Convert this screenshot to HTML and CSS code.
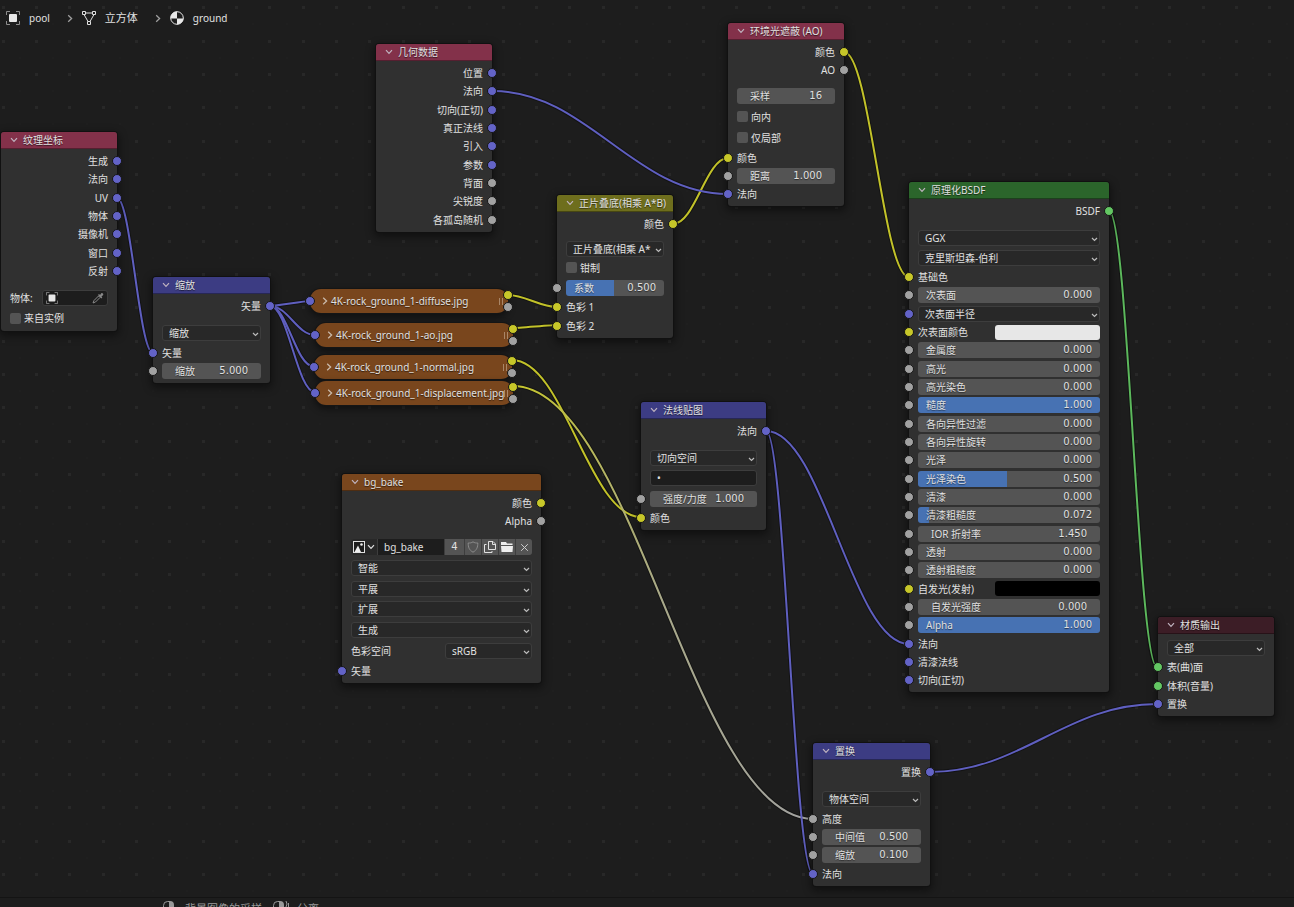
FILE: index.html
```html
<!DOCTYPE html>
<html lang="zh-CN">
<head>
<meta charset="utf-8">
<title>ground</title>
<link rel="stylesheet" href="styles.css">
</head>
<body>
<svg class="defs" aria-hidden="true">
  <symbol id="down" viewBox="0 0 8 6"><path d="M1 1.2 4 4.4 7 1.2" fill="none" stroke="currentColor" stroke-width="1.2"/></symbol>
  <symbol id="right" viewBox="0 0 6 8"><path d="M1.2 .8 4.6 4 1.2 7.2" fill="none" stroke="currentColor" stroke-width="1.3"/></symbol>
  <symbol id="object" viewBox="0 0 14 14"><path d="M.5 4V.5H4M10 .5h3.500V4M13.500 10v3.500H10M4 13.500H.5V10" fill="none" stroke="#8c8c8c"/><rect x="3" y="3" width="8" height="8" rx="1" fill="#e8e8e8"/></symbol>
  <symbol id="mouse" viewBox="0 0 16 16"><path d="M6 .5H4.500A4 4 0 0 0 .5 4.500V11a5 5 0 0 0 10 0V4.500" fill="none" stroke="#999"/><path d="M6 0h1a4 4 0 0 1 4 4v4H6z" fill="#999"/></symbol>
</svg>

<main class="canvas">
  <svg class="wires" aria-hidden="true">
    <defs>
      <pattern id="dots" width="100" height="100" patternUnits="userSpaceOnUse">
        <path d="M2 6h3v3H2zM35 6h3v3h-3zM68 6h3v3h-3zM2 40h3v3H2zM35 40h3v3h-3zM68 40h3v3h-3zM2 73h3v3H2zM35 73h3v3h-3zM68 73h3v3h-3z" fill="#282828"/>
        <path d="M19 23h2v2h-2zM52 23h2v2h-2zM86 23h2v2h-2zM19 57h2v2h-2zM52 57h2v2h-2zM86 57h2v2h-2zM19 90h2v2h-2zM52 90h2v2h-2zM86 90h2v2h-2z" fill="#1f1f1f"/>
      </pattern>
      <linearGradient id="fade" gradientUnits="userSpaceOnUse" x1="513" y1="0" x2="813" y2="0">
        <stop offset="0" stop-color="#c7c729"/><stop offset=".5" stop-color="#a8a88a"/><stop offset="1" stop-color="#a1a1a1"/>
      </linearGradient>
      <g id="links">
        <path class="w-vec" d="M117 198C131 198 139 353 153 353"/>
        <path class="w-vec" d="M270 306C277 306 303 301 310 301"/>
        <path class="w-vec" d="M270 306C288 306 297 335 315 335"/>
        <path class="w-vec" d="M270 306C287 306 296 366 313 366"/>
        <path class="w-vec" d="M270 306C288 306 297 392 315 392"/>
        <path class="w-col" d="M508 295C525 295 540 307 557 307"/>
        <path class="w-col" d="M513 328C517 328 553 325 557 325"/>
        <path class="w-col" d="M512 360C564 360 589 517 641 517"/>
        <path class="w-mix" d="M513 386C633 386 693 819 813 819"/>
        <path class="w-col" d="M673 224C695 224 706 158 728 158"/>
        <path class="w-vec" d="M493 91C587 91 634 194 728 194"/>
        <path class="w-col" d="M844 52C870 52 883 277 909 277"/>
        <path class="w-vec" d="M766 431C823 431 852 644 909 644"/>
        <path class="w-vec" d="M766 431C785 431 794 874 813 874"/>
        <path class="w-sha" d="M1109 211C1128 211 1138 667 1157 667"/>
        <path class="w-vec" d="M930 772C1021 772 1066 704 1157 704"/>
      </g>
    </defs>
    <rect width="100%" height="100%" fill="url(#dots)"/>
    <use href="#links" class="casing"/>
    <use href="#links" class="core"/>
  </svg>

  <nav class="crumbs">
    <span class="crumb"><svg width="14" height="14"><use href="#object"/></svg><span>pool</span></span>
    <svg class="sep" width="6" height="9"><use href="#right"/></svg>
    <span class="crumb"><svg width="14" height="14" viewBox="0 0 14 14" fill="none" stroke="#e0e0e0"><path d="M3.500 2h7M2 3.500 6 10.500M12 3.500 8 10.500"/><path d="M.5.5h3v3h-3zM10.500.5h3v3h-3zM5.500 10.500h3v3h-3z"/></svg><span class="cjk">立方体</span></span>
    <svg class="sep" width="6" height="9"><use href="#right"/></svg>
    <span class="crumb"><svg width="14" height="14" viewBox="0 0 14 14"><circle cx="7" cy="7" r="6.300" fill="#1d1d1d" stroke="#e8e8e8"/><path d="M7 .5V7.500H.6A6.500 6.500 0 0 1 7 .5M7 7.500h6.500A6.500 6.500 0 0 1 7 13.500z" fill="#e8e8e8"/></svg><span>ground</span></span>
  </nav>

  <section class="node n-texcoord">
    <h2 class="head red"><svg><use href="#down"/></svg>纹理坐标</h2>
    <div class="body">
      <div class="row out">生成<i class="socket vec"></i></div>
      <div class="row out">法向<i class="socket vec"></i></div>
      <div class="row out">UV<i class="socket vec"></i></div>
      <div class="row out">物体<i class="socket vec"></i></div>
      <div class="row out">摄像机<i class="socket vec"></i></div>
      <div class="row out">窗口<i class="socket vec"></i></div>
      <div class="row out">反射<i class="socket vec"></i></div>
      <div class="row tall gap split"><span>物体:</span><button class="picker" aria-label="物体"><svg width="12" height="12"><use href="#object"/></svg><svg width="12" height="12" viewBox="0 0 12 12"><path d="M1 11 2 8.500 6.500 4 8 5.500 3.500 10z" fill="none" stroke="#888"/><path d="M6 3 7 2l1 1 1.500-2A1.500 1.500 0 0 1 11.200 3L9.500 4.500l.8.900-1 1z" fill="#888"/></svg></button></div>
      <div class="row tall"><label class="check"><input type="checkbox">来自实例</label></div>
    </div>
  </section>

  <section class="node n-scale">
    <h2 class="head blue"><svg><use href="#down"/></svg>缩放</h2>
    <div class="body">
      <div class="row out">矢量<i class="socket vec"></i></div>
      <div class="row tall gap"><select aria-label="类型"><option>缩放</option></select></div>
      <div class="row">矢量<i class="socket vec"></i></div>
      <div class="row"><label class="field num">缩放<input value="5.000"></label><i class="socket val"></i></div>
    </div>
  </section>

  <section class="node n-geometry">
    <h2 class="head red"><svg><use href="#down"/></svg>几何数据</h2>
    <div class="body">
      <div class="row out">位置<i class="socket vec"></i></div>
      <div class="row out">法向<i class="socket vec"></i></div>
      <div class="row out">切向(正切)<i class="socket vec"></i></div>
      <div class="row out">真正法线<i class="socket vec"></i></div>
      <div class="row out">引入<i class="socket vec"></i></div>
      <div class="row out">参数<i class="socket vec"></i></div>
      <div class="row out">背面<i class="socket val"></i></div>
      <div class="row out">尖锐度<i class="socket val"></i></div>
      <div class="row out">各孤岛随机<i class="socket val"></i></div>
    </div>
  </section>

  <section class="pill p-diffuse"><svg><use href="#right"/></svg><h2>4K-rock_ground_1-diffuse.jpg</h2><i class="grip"></i><i class="socket vec"></i><i class="socket col upper"></i><i class="socket val lower"></i></section>
  <section class="pill p-ao"><svg><use href="#right"/></svg><h2>4K-rock_ground_1-ao.jpg</h2><i class="grip"></i><i class="socket vec"></i><i class="socket col upper"></i><i class="socket val lower"></i></section>
  <section class="pill p-normal"><svg><use href="#right"/></svg><h2>4K-rock_ground_1-normal.jpg</h2><i class="grip"></i><i class="socket vec"></i><i class="socket col upper"></i><i class="socket val lower"></i></section>
  <section class="pill p-disp"><svg><use href="#right"/></svg><h2>4K-rock_ground_1-displacement.jpg</h2><i class="grip"></i><i class="socket vec"></i><i class="socket col upper"></i><i class="socket val lower"></i></section>

  <section class="node n-bake">
    <h2 class="head brown"><svg><use href="#down"/></svg>bg_bake</h2>
    <div class="body">
      <div class="row out">颜色<i class="socket col"></i></div>
      <div class="row out">Alpha<i class="socket val"></i></div>
      <div class="row tall gap">
        <div class="datablock">
          <button class="browse" aria-label="浏览图像"><svg width="12" height="12" viewBox="0 0 12 12"><rect x=".5" y=".5" width="11" height="11" fill="#1d1d1d" stroke="#e0e0e0"/><path d="M1.500 11 5 4.500 8 11z" fill="#eee"/><circle cx="8.500" cy="3.500" r="1.300" fill="#eee"/></svg><svg width="8" height="6"><use href="#down"/></svg></button>
          <input class="dbname" aria-label="名称" value="bg_bake">
          <button class="users digits">4</button>
          <button aria-label="伪用户"><svg width="12" height="12" viewBox="0 0 12 12"><path d="M6 .8C4.500 2 3 2 1.200 2c0 4 .8 7 4.800 9.200C10 9 10.800 6 10.800 2 9 2 7.500 2 6 .8z" fill="none" stroke="#8c8c8c"/></svg></button>
          <button aria-label="新建"><svg width="12" height="12" viewBox="0 0 12 12" fill="none" stroke="#e0e0e0"><path d="M4.500.5H9L11.500 3v5.500h-7zM8.500.5V3.500h3M2.500 3.500h-2v8h7.500v-1.500"/></svg></button>
          <button aria-label="打开"><svg width="12" height="12" viewBox="0 0 12 12" fill="#eee"><path d="M0 1h5l1 1.500h5.500V4H0zM0 5h12l-.5 6H.5z"/></svg></button>
          <button aria-label="断开"><svg width="9" height="9" viewBox="0 0 9 9" fill="none" stroke="#ccc"><path d="m1.200 1.200 6.600 6.600M7.800 1.200 1.200 7.800"/></svg></button>
        </div>
      </div>
      <div class="row tall"><select aria-label="插值"><option>智能</option></select></div>
      <div class="row tall"><select aria-label="投射"><option>平展</option></select></div>
      <div class="row tall"><select aria-label="扩展"><option>扩展</option></select></div>
      <div class="row tall"><select aria-label="来源"><option>生成</option></select></div>
      <div class="row tall split"><label for="space">色彩空间</label><select id="space" class="half"><option>sRGB</option></select></div>
      <div class="row">矢量<i class="socket vec"></i></div>
    </div>
  </section>

  <section class="node n-mix">
    <h2 class="head olive"><svg><use href="#down"/></svg>正片叠底(相乘 A*B)</h2>
    <div class="body">
      <div class="row out">颜色<i class="socket col"></i></div>
      <div class="row gap"><select aria-label="混合模式"><option>正片叠底(相乘 A*</option></select></div>
      <div class="row"><label class="check"><input type="checkbox">钳制</label></div>
      <div class="row tall"><label class="field" style="--fill:49%">系数<input value="0.500"></label><i class="socket val"></i></div>
      <div class="row">色彩 1<i class="socket col"></i></div>
      <div class="row">色彩 2<i class="socket col"></i></div>
    </div>
  </section>

  <section class="node n-ao">
    <h2 class="head red"><svg><use href="#down"/></svg>环境光遮蔽 (AO)</h2>
    <div class="body">
      <div class="row out">颜色<i class="socket col"></i></div>
      <div class="row out">AO<i class="socket val"></i></div>
      <div class="row tall gap"><label class="field num">采样<input value="16"></label></div>
      <div class="row tall"><label class="check"><input type="checkbox">向内</label></div>
      <div class="row tall"><label class="check"><input type="checkbox">仅局部</label></div>
      <div class="row">颜色<i class="socket col"></i></div>
      <div class="row"><label class="field num">距离<input value="1.000"></label><i class="socket val"></i></div>
      <div class="row">法向<i class="socket vec"></i></div>
    </div>
  </section>

  <section class="node n-normal">
    <h2 class="head blue"><svg><use href="#down"/></svg>法线贴图</h2>
    <div class="body">
      <div class="row out">法向<i class="socket vec"></i></div>
      <div class="row tall gap"><select aria-label="空间"><option>切向空间</option></select></div>
      <div class="row tall"><button class="uvmap" aria-label="UV 贴图">•</button></div>
      <div class="row tall"><label class="field num">强度/力度<input value="1.000"></label><i class="socket val"></i></div>
      <div class="row">颜色<i class="socket col"></i></div>
    </div>
  </section>

  <section class="node n-bsdf">
    <h2 class="head green"><svg><use href="#down"/></svg>原理化BSDF</h2>
    <div class="body">
      <div class="row out">BSDF<i class="socket sha"></i></div>
      <div class="row tall gap"><select aria-label="分布"><option>GGX</option></select></div>
      <div class="row tall"><select aria-label="次表面方法"><option>克里斯坦森-伯利</option></select></div>
      <div class="row">基础色<i class="socket col"></i></div>
      <div class="row"><label class="field">次表面<input value="0.000"></label><i class="socket val"></i></div>
      <div class="row"><select aria-label="次表面半径"><option>次表面半径</option></select><i class="socket vec"></i></div>
      <div class="row split"><label for="sss">次表面颜色</label><input id="sss" type="color" value="#e7e7e7"><i class="socket col"></i></div>
      <div class="row"><label class="field">金属度<input value="0.000"></label><i class="socket val"></i></div>
      <div class="row"><label class="field">高光<input value="0.000"></label><i class="socket val"></i></div>
      <div class="row"><label class="field">高光染色<input value="0.000"></label><i class="socket val"></i></div>
      <div class="row"><label class="field" style="--fill:100%">糙度<input value="1.000"></label><i class="socket val"></i></div>
      <div class="row"><label class="field">各向异性过滤<input value="0.000"></label><i class="socket val"></i></div>
      <div class="row"><label class="field">各向异性旋转<input value="0.000"></label><i class="socket val"></i></div>
      <div class="row"><label class="field">光泽<input value="0.000"></label><i class="socket val"></i></div>
      <div class="row"><label class="field" style="--fill:49%">光泽染色<input value="0.500"></label><i class="socket val"></i></div>
      <div class="row"><label class="field">清漆<input value="0.000"></label><i class="socket val"></i></div>
      <div class="row"><label class="field" style="--fill:6%">清漆粗糙度<input value="0.072"></label><i class="socket val"></i></div>
      <div class="row"><label class="field num">IOR 折射率<input value="1.450"></label><i class="socket val"></i></div>
      <div class="row"><label class="field">透射<input value="0.000"></label><i class="socket val"></i></div>
      <div class="row"><label class="field">透射粗糙度<input value="0.000"></label><i class="socket val"></i></div>
      <div class="row split"><label for="emit">自发光(发射)</label><input id="emit" type="color" value="#000000"><i class="socket col"></i></div>
      <div class="row"><label class="field num">自发光强度<input value="0.000"></label><i class="socket val"></i></div>
      <div class="row"><label class="field" style="--fill:100%">Alpha<input value="1.000"></label><i class="socket val"></i></div>
      <div class="row">法向<i class="socket vec"></i></div>
      <div class="row">清漆法线<i class="socket vec"></i></div>
      <div class="row">切向(正切)<i class="socket vec"></i></div>
    </div>
  </section>

  <section class="node n-output">
    <h2 class="head maroon"><svg><use href="#down"/></svg>材质输出</h2>
    <div class="body">
      <div class="row tall"><select aria-label="目标"><option>全部</option></select></div>
      <div class="row">表(曲)面<i class="socket sha"></i></div>
      <div class="row">体积(音量)<i class="socket sha"></i></div>
      <div class="row">置换<i class="socket vec"></i></div>
    </div>
  </section>

  <section class="node n-displace">
    <h2 class="head blue"><svg><use href="#down"/></svg>置换</h2>
    <div class="body">
      <div class="row out">置换<i class="socket vec"></i></div>
      <div class="row tall gap"><select aria-label="空间"><option>物体空间</option></select></div>
      <div class="row">高度<i class="socket val"></i></div>
      <div class="row"><label class="field num">中间值<input value="0.500"></label><i class="socket val"></i></div>
      <div class="row"><label class="field num">缩放<input value="0.100"></label><i class="socket val"></i></div>
      <div class="row">法向<i class="socket vec"></i></div>
    </div>
  </section>
</main>

<footer class="status">
  <span class="hint"><svg width="16" height="16"><use href="#mouse"/></svg>背景图像的采样</span>
  <span class="hint"><svg width="18" height="16"><use href="#mouse" width="16" height="16"/><path d="M13 0q2 3 0 6M15.500 2v6" fill="none" stroke="#999"/></svg>分离</span>
</footer>
</body>
</html>
```
FILE: styles.css
```css
* { box-sizing: border-box; }

body {
  margin: 0;
  height: 100vh;
  display: flex;
  flex-direction: column;
  overflow: hidden;
  background: #1d1d1d;
  color: #e0e0e0;
  font: 10px/14px "Noto Sans", "Noto Sans CJK SC", sans-serif;
}

h2 { margin: 0; font: inherit; }
button, input, select { font: inherit; color: inherit; margin: 0; padding: 0; border: 0; }
i { font-style: normal; }
.defs { position: absolute; width: 0; height: 0; }

.canvas { position: relative; flex: 1; min-height: 0; overflow: hidden; }
.wires { position: absolute; inset: 0; width: 100%; height: 100%; fill: none; }
.casing { stroke-width: 4; opacity: .35; --vec: #000; --col: #000; --sha: #000; --mix: #000; }
.core { stroke-width: 2; --vec: #5f5fc0; --col: #c2c229; --sha: #5cb85c; --mix: url(#fade); }
.w-vec { stroke: var(--vec); }
.w-col { stroke: var(--col); }
.w-sha { stroke: var(--sha); }
.w-mix { stroke: var(--mix); }

/* breadcrumb */
.crumbs { position: absolute; top: 10px; left: 6px; height: 16px; display: flex; align-items: center; }
.crumb { display: flex; align-items: center; gap: 9px; }
.cjk { font-size: 11px; }
.sep { margin: 0 9px 0 17px; color: #a0a0a0; }

/* nodes */
.node {
  position: absolute;
  width: 116px;
  border-radius: 3px;
  background: #303030;
  box-shadow: 0 0 0 1px #111, 0 3px 8px 2px rgba(0, 0, 0, .45);
}
.head {
  height: 17px;
  display: flex;
  align-items: center;
  gap: 5px;
  padding-left: 9px;
  border-radius: 3px 3px 0 0;
  border-bottom: 1px solid rgba(0, 0, 0, .35);
  white-space: nowrap;
  text-shadow: 0 1px 1px rgba(0, 0, 0, .6);
}
.head svg { width: 8px; height: 6px; color: #c0b4c0; }
.red { background: #83314a; }
.blue { background: #3c3c83; }
.brown { background: #79461d; }
.olive { background: #6e6e1d; }
.green { background: #2b652b; }
.maroon { background: #3c1d26; }

.body { padding: 3px 9px; }
.row {
  position: relative;
  height: 18px;
  margin: 0 -9px;
  padding: 0 9px;
  display: flex;
  align-items: center;
  white-space: nowrap;
}
.row:nth-child(3n) { height: 19px; }
.row.tall { height: 21px; }
.row.tall:nth-child(3n) { height: 20px; }
.gap { margin-top: 7px; }
.out { justify-content: flex-end; }
.split { justify-content: space-between; }

.socket {
  position: absolute;
  left: -5px;
  top: 50%;
  width: 10px;
  height: 10px;
  margin-top: -5px;
  border: 1px solid #161616;
  border-radius: 50%;
}
.out .socket { left: auto; right: -5px; }
.vec { background: #6363c7; }
.col { background: #c7c729; }
.val { background: #a1a1a1; }
.sha { background: #63c763; }

/* controls */
.field {
  flex: 1;
  min-width: 0;
  height: 16px;
  display: flex;
  align-items: center;
  padding: 0 8px;
  border-radius: 3px;
  background: linear-gradient(#4772b3, #4772b3) no-repeat 0 0 / var(--fill, 0%) 100%, #545454;
  text-shadow: 0 1px 1px rgba(0, 0, 0, .5);
}
.field.num { padding: 0 13px; }
.field input {
  flex: 1;
  width: 0;
  min-width: 0;
  height: 14px;
  background: none;
  text-align: right;
  text-shadow: inherit;
  outline: 0;
}
.field input, .digits { font-family: "DejaVu Sans", sans-serif; }

select {
  appearance: none;
  flex: 1;
  min-width: 0;
  height: 16px;
  padding: 0 12px 0 6px;
  border: 1px solid #3d3d3d;
  border-radius: 3px;
  background: #282828 url("data:image/svg+xml,%3Csvg xmlns='http://www.w3.org/2000/svg' width='7' height='5'%3E%3Cpath d='M1 1l2.500 2.500L6 1' fill='none' stroke='%23bbb' stroke-width='1.200'/%3E%3C/svg%3E") no-repeat right 1px top 6px;
}
select.half { flex: 0 0 87px; }

input[type="color"] {
  appearance: none;
  width: 105px;
  height: 15px;
  background: none;
}
input[type="color"]::-webkit-color-swatch-wrapper { padding: 0; }
input[type="color"]::-webkit-color-swatch { border: 0; border-radius: 3px; }

.check { display: flex; align-items: center; gap: 3px; }
.check input { appearance: none; width: 11px; height: 11px; border-radius: 2px; background: #545454; }

.picker, .uvmap {
  height: 16px;
  border: 1px solid #3d3d3d;
  border-radius: 3px;
  background: #1d1d1d;
}
.picker { width: 66px; display: flex; align-items: center; justify-content: space-between; padding: 0 3px; }
.uvmap { flex: 1; padding-left: 6px; text-align: left; line-height: 14px; }

.datablock {
  flex: 1;
  height: 16px;
  display: grid;
  grid-template-columns: 26px 1fr 19px repeat(4, 16px);
  gap: 1px;
  border-radius: 3px;
  overflow: hidden;
  background: #3d3d3d;
}
.datablock button { display: flex; align-items: center; justify-content: center; background: #545454; }
.datablock .browse { background: #282828; gap: 2px; }
.dbname { min-width: 0; padding-left: 6px; background: #1d1d1d; }

/* collapsed nodes */
.pill {
  position: absolute;
  width: 198px;
  height: 24px;
  display: flex;
  align-items: center;
  gap: 3px;
  padding: 0 5px 0 12px;
  border-radius: 11px;
  background: #79461d;
  box-shadow: 0 0 0 1px #151515, 0 3px 7px 1px rgba(0, 0, 0, .45);
  text-shadow: 0 1px 1px rgba(0, 0, 0, .6);
  white-space: nowrap;
}
.pill > svg { flex: none; width: 6px; height: 8px; color: #c9b9aa; }
.grip { position: absolute; right: 5px; top: 9px; width: 4px; height: 7px; border: solid #a98668; border-width: 0 1px; }
.pill .socket { top: 12px; }
.pill .upper { left: auto; right: -5px; top: 6px; }
.pill .lower { left: auto; right: -5px; top: 18px; }

/* canvas positions */
.n-texcoord { left: 1px; top: 132px; }
.n-scale { left: 153px; top: 277px; width: 117px; }
.n-geometry { left: 376px; top: 44px; }
.n-bake { left: 342px; top: 474px; width: 199px; }
.n-mix { left: 557px; top: 195px; }
.n-ao { left: 728px; top: 23px; }
.n-normal { left: 641px; top: 402px; width: 125px; }
.n-bsdf { left: 909px; top: 182px; width: 200px; }
.n-output { left: 1158px; top: 617px; }
.n-displace { left: 813px; top: 743px; width: 117px; }
.p-diffuse { left: 310px; top: 289px; }
.p-ao { left: 315px; top: 323px; }
.p-normal { left: 314px; top: 355px; }
.p-disp { left: 315px; top: 381px; }

/* status bar */
.status {
  flex: none;
  height: 10px;
  overflow: hidden;
  display: flex;
  align-items: flex-start;
  gap: 11px;
  padding: 3px 0 0 163px;
  border-top: 1px solid #141414;
  color: #999;
  font-size: 11px;
}
.hint { display: flex; align-items: flex-start; gap: 6px; line-height: 16px; }
.hint svg { flex: none; }
```
